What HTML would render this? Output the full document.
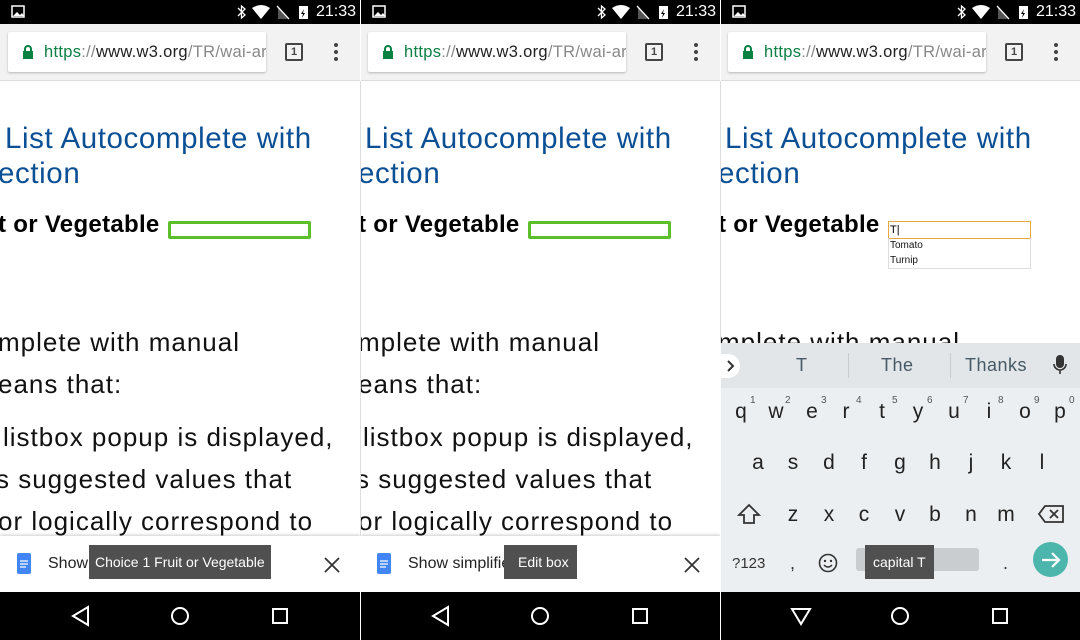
<!DOCTYPE html>
<html><head><meta charset="utf-8">
<style>
*{margin:0;padding:0;box-sizing:border-box}
body{width:1080px;height:640px;overflow:hidden;background:#fff;font-family:"Liberation Sans",sans-serif;position:relative}
.p{position:absolute;top:0;width:360px;height:640px;overflow:hidden;background:#fff}
.a{position:absolute;white-space:nowrap}
.sb{left:0;top:0;width:360px;height:24px;background:#000;color:#fff}
.tb{left:0;top:24px;width:360px;height:57px;background:#f2f2f2;border-bottom:1px solid #dcdcdc}
.url{left:8px;top:8px;width:258px;height:40px;background:#fff;border-radius:2px;box-shadow:0 1px 2px rgba(0,0,0,.25);font-size:16.5px;letter-spacing:0.3px;line-height:40px;padding-left:36px;color:#222;overflow:hidden}
.h1{color:#0b4f95;font-size:29.5px;letter-spacing:0.6px}
.h2{font-weight:bold;font-size:24px;letter-spacing:0.3px;color:#000}
.bd{font-size:26px;letter-spacing:1px;color:#111}
.bot{left:0;top:536px;width:360px;height:56px;background:#fff;box-shadow:0 -1px 3px rgba(0,0,0,.2)}
.nav{left:0;top:592px;width:360px;height:48px;background:#000}
.tip{background:#505050;color:#fff;font-size:14px;height:34px;line-height:34px;padding:0 8px}
.k{position:absolute;font-size:21px;color:#222;width:36px;text-align:center}
.n{position:absolute;font-size:10px;color:#555}
</style></head><body>

<div class="p" style="left:0">
 <div class="a sb">
  <svg class="a" style="left:11px;top:5px" width="14" height="13"><rect x="1" y="1" width="12" height="11" fill="none" stroke="#fff" stroke-width="1.5"/><path d="M2 11l4-4 3 3 2-2 2 3z" fill="#fff"/></svg>
  <svg class="a" style="left:235px;top:4px" width="80" height="16"><path d="M3 4l7 7-3.5 3V2L10 5 3 12" fill="none" stroke="#fff" stroke-width="1.3"/><path d="M17 4q9-6 18 0l-9 11z" fill="#fff"/><path d="M43 15V2l10 13z" fill="#555"/><path d="M42 2l12 13" stroke="#fff" stroke-width="1.3"/><rect x="64" y="2" width="9" height="13" fill="#fff"/><path d="M69 5l-3 5h2l-1 4 3-5h-2z" fill="#000"/></svg>
  <div class="a" style="left:316px;top:3px;font-size:16px">21:33</div>
 </div>
 <div class="a tb">
  <div class="a url"><svg class="a" style="left:14px;top:12px" width="12" height="15"><path d="M3 7V5a3 3 0 0 1 6 0v2" fill="none" stroke="#0b8043" stroke-width="2"/><rect x="1" y="7" width="10" height="8" fill="#0b8043"/></svg><span style="color:#0b8043">https</span><span style="color:#888">://</span>www.w3.org<span style="color:#888">/TR/wai-ar</span></div>
  <div class="a" style="left:285px;top:19px;width:18px;height:18px;border:2px solid #444;border-radius:2px;font-size:11px;font-weight:bold;text-align:center;line-height:14px;color:#444">1</div>
  <svg class="a" style="left:333px;top:18px" width="6" height="20"><circle cx="3" cy="3" r="2" fill="#444"/><circle cx="3" cy="10" r="2" fill="#444"/><circle cx="3" cy="17" r="2" fill="#444"/></svg>
 </div>
 <div class="a h1" style="left:5px;top:122px">List Autocomplete with</div>
 <div class="a h1" style="left:-2px;top:157px">ection</div>
 <div class="a h2" style="left:-2px;top:211px">t or Vegetable</div>
 <div class="a" style="left:168px;top:221px;width:143px;height:18px;border:3px solid #5cbf2a;border-radius:2px"></div>
 <div class="a bd" style="left:-2px;top:327px">mplete with manual</div>
 <div class="a bd" style="left:-2px;top:369px">eans that:</div>
 <div class="a bd" style="left:3px;top:422px">listbox popup is displayed,</div>
 <div class="a bd" style="left:-4px;top:464px">s suggested values that</div>
 <div class="a bd" style="left:-2px;top:506px">or logically correspond to</div>
 <div class="a bot">
  <svg class="a" style="left:17px;top:17px" width="14" height="21"><rect width="14" height="21" rx="2" fill="#4285f4"/><path d="M3 8h8M3 11h8M3 14h6" stroke="#fff" stroke-width="1.3"/></svg>
  <div class="a" style="left:48px;top:19px;font-size:16px;color:#222">Show simplified view</div>
  <div class="a tip" style="left:89px;top:9px;padding:0 6px">Choice 1 Fruit or Vegetable</div>
  <svg class="a" style="left:324px;top:21px" width="16" height="16"><path d="M1 1l14 14M15 1L1 15" stroke="#333" stroke-width="1.8"/></svg>
 </div>
 <div class="a nav"><svg width="360" height="48"><path d="M88 15v18L73 24z" fill="none" stroke="#fff" stroke-width="2"/><circle cx="180" cy="24" r="8" fill="none" stroke="#fff" stroke-width="2"/><rect x="273" y="17" width="14" height="14" fill="none" stroke="#fff" stroke-width="2"/></svg></div>
</div>
<div class="a" style="left:360px;top:81px;width:1px;height:455px;background:#ddd;z-index:2"></div>

<div class="p" style="left:361px;width:359px">
 <div class="a sb">
  <svg class="a" style="left:11px;top:5px" width="14" height="13"><rect x="1" y="1" width="12" height="11" fill="none" stroke="#fff" stroke-width="1.5"/><path d="M2 11l4-4 3 3 2-2 2 3z" fill="#fff"/></svg>
  <svg class="a" style="left:234px;top:4px" width="80" height="16"><path d="M3 4l7 7-3.5 3V2L10 5 3 12" fill="none" stroke="#fff" stroke-width="1.3"/><path d="M17 4q9-6 18 0l-9 11z" fill="#fff"/><path d="M43 15V2l10 13z" fill="#555"/><path d="M42 2l12 13" stroke="#fff" stroke-width="1.3"/><rect x="64" y="2" width="9" height="13" fill="#fff"/><path d="M69 5l-3 5h2l-1 4 3-5h-2z" fill="#000"/></svg>
  <div class="a" style="left:315px;top:3px;font-size:16px">21:33</div>
 </div>
 <div class="a tb">
  <div class="a url" style="left:7px"><svg class="a" style="left:14px;top:12px" width="12" height="15"><path d="M3 7V5a3 3 0 0 1 6 0v2" fill="none" stroke="#0b8043" stroke-width="2"/><rect x="1" y="7" width="10" height="8" fill="#0b8043"/></svg><span style="color:#0b8043">https</span><span style="color:#888">://</span>www.w3.org<span style="color:#888">/TR/wai-ar</span></div>
  <div class="a" style="left:284px;top:19px;width:18px;height:18px;border:2px solid #444;border-radius:2px;font-size:11px;font-weight:bold;text-align:center;line-height:14px;color:#444">1</div>
  <svg class="a" style="left:332px;top:18px" width="6" height="20"><circle cx="3" cy="3" r="2" fill="#444"/><circle cx="3" cy="10" r="2" fill="#444"/><circle cx="3" cy="17" r="2" fill="#444"/></svg>
 </div>
 <div class="a h1" style="left:4px;top:122px">List Autocomplete with</div>
 <div class="a h1" style="left:-3px;top:157px">ection</div>
 <div class="a h2" style="left:-3px;top:211px">t or Vegetable</div>
 <div class="a" style="left:167px;top:221px;width:143px;height:18px;border:3px solid #5cbf2a;border-radius:2px"></div>
 <div class="a bd" style="left:-3px;top:327px">mplete with manual</div>
 <div class="a bd" style="left:-3px;top:369px">eans that:</div>
 <div class="a bd" style="left:2px;top:422px">listbox popup is displayed,</div>
 <div class="a bd" style="left:-5px;top:464px">s suggested values that</div>
 <div class="a bd" style="left:-3px;top:506px">or logically correspond to</div>
 <div class="a bot">
  <svg class="a" style="left:16px;top:17px" width="14" height="21"><rect width="14" height="21" rx="2" fill="#4285f4"/><path d="M3 8h8M3 11h8M3 14h6" stroke="#fff" stroke-width="1.3"/></svg>
  <div class="a" style="left:47px;top:19px;font-size:16px;color:#222">Show simplified view</div>
  <div class="a tip" style="left:143px;top:9px;padding:0 8px 0 14px">Edit box</div>
  <svg class="a" style="left:323px;top:21px" width="16" height="16"><path d="M1 1l14 14M15 1L1 15" stroke="#333" stroke-width="1.8"/></svg>
 </div>
 <div class="a nav"><svg width="360" height="48"><path d="M87 15v18L72 24z" fill="none" stroke="#fff" stroke-width="2"/><circle cx="179" cy="24" r="8" fill="none" stroke="#fff" stroke-width="2"/><rect x="272" y="17" width="14" height="14" fill="none" stroke="#fff" stroke-width="2"/></svg></div>
</div>
<div class="a" style="left:720px;top:81px;width:1px;height:262px;background:#ddd;z-index:2"></div>

<div class="p" style="left:721px;width:359px">
 <div class="a sb">
  <svg class="a" style="left:11px;top:5px" width="14" height="13"><rect x="1" y="1" width="12" height="11" fill="none" stroke="#fff" stroke-width="1.5"/><path d="M2 11l4-4 3 3 2-2 2 3z" fill="#fff"/></svg>
  <svg class="a" style="left:234px;top:4px" width="80" height="16"><path d="M3 4l7 7-3.5 3V2L10 5 3 12" fill="none" stroke="#fff" stroke-width="1.3"/><path d="M17 4q9-6 18 0l-9 11z" fill="#fff"/><path d="M43 15V2l10 13z" fill="#555"/><path d="M42 2l12 13" stroke="#fff" stroke-width="1.3"/><rect x="64" y="2" width="9" height="13" fill="#fff"/><path d="M69 5l-3 5h2l-1 4 3-5h-2z" fill="#000"/></svg>
  <div class="a" style="left:315px;top:3px;font-size:16px">21:33</div>
 </div>
 <div class="a tb">
  <div class="a url" style="left:7px"><svg class="a" style="left:14px;top:12px" width="12" height="15"><path d="M3 7V5a3 3 0 0 1 6 0v2" fill="none" stroke="#0b8043" stroke-width="2"/><rect x="1" y="7" width="10" height="8" fill="#0b8043"/></svg><span style="color:#0b8043">https</span><span style="color:#888">://</span>www.w3.org<span style="color:#888">/TR/wai-ar</span></div>
  <div class="a" style="left:284px;top:19px;width:18px;height:18px;border:2px solid #444;border-radius:2px;font-size:11px;font-weight:bold;text-align:center;line-height:14px;color:#444">1</div>
  <svg class="a" style="left:332px;top:18px" width="6" height="20"><circle cx="3" cy="3" r="2" fill="#444"/><circle cx="3" cy="10" r="2" fill="#444"/><circle cx="3" cy="17" r="2" fill="#444"/></svg>
 </div>
 <div class="a h1" style="left:4px;top:122px">List Autocomplete with</div>
 <div class="a h1" style="left:-3px;top:157px">ection</div>
 <div class="a h2" style="left:-3px;top:211px">t or Vegetable</div>
 <div class="a" style="left:167px;top:221px;width:143px;height:18px;border:1px solid #e6a940;font-size:11px;line-height:16px;padding-left:1px">T|</div>
 <div class="a" style="left:167px;top:238px;width:143px;height:31px;border:1px solid #ddd;border-top:none;font-size:10px;line-height:15px;padding-left:1px;color:#111">Tomato<br>Turnip</div>
 <div class="a bd" style="left:-3px;top:327px">mplete with manual</div>
 <div class="a" style="left:-1px;top:343px;width:360px;height:249px;background:#eceff1">
  <div class="a" style="left:0;top:0;width:360px;height:45px;background:#e3e6e9"></div>
  <div class="a" style="left:0;top:11px;width:20px;height:24px;background:#fff;border-radius:0 12px 12px 0"></div>
  <svg class="a" style="left:6px;top:16px" width="10" height="14"><path d="M2 2l5 5-5 5" fill="none" stroke="#333" stroke-width="2"/></svg>
  <div class="a" style="left:76px;top:12px;font-size:18px;color:#455a64">T</div>
  <div class="a" style="left:128px;top:10px;width:1px;height:25px;background:#c8ccd0"></div>
  <div class="a" style="left:161px;top:12px;font-size:18px;letter-spacing:0.5px;color:#455a64">The</div>
  <div class="a" style="left:230px;top:10px;width:1px;height:25px;background:#c8ccd0"></div>
  <div class="a" style="left:245px;top:12px;font-size:18px;letter-spacing:0.5px;color:#455a64">Thanks</div>
  <svg class="a" style="left:333px;top:12px" width="14" height="20"><rect x="3" y="0" width="8" height="13" rx="4" fill="#333"/><path d="M1 9a6 6 0 0 0 12 0M7 15v4" fill="none" stroke="#333" stroke-width="1.6"/></svg>
  <div class="k" style="left:3px;top:57px">q</div><div class="k" style="left:38px;top:57px">w</div><div class="k" style="left:74px;top:57px">e</div><div class="k" style="left:108px;top:57px">r</div><div class="k" style="left:144px;top:57px">t</div><div class="k" style="left:180px;top:57px">y</div><div class="k" style="left:216px;top:57px">u</div><div class="k" style="left:251px;top:57px">i</div><div class="k" style="left:287px;top:57px">o</div><div class="k" style="left:322px;top:57px">p</div>
  <div class="n" style="left:30px;top:52px">1</div><div class="n" style="left:65px;top:52px">2</div><div class="n" style="left:101px;top:52px">3</div><div class="n" style="left:136px;top:52px">4</div><div class="n" style="left:172px;top:52px">5</div><div class="n" style="left:207px;top:52px">6</div><div class="n" style="left:243px;top:52px">7</div><div class="n" style="left:278px;top:52px">8</div><div class="n" style="left:314px;top:52px">9</div><div class="n" style="left:349px;top:52px">0</div>
  <div class="k" style="left:20px;top:108px">a</div><div class="k" style="left:55px;top:108px">s</div><div class="k" style="left:91px;top:108px">d</div><div class="k" style="left:126px;top:108px">f</div><div class="k" style="left:162px;top:108px">g</div><div class="k" style="left:197px;top:108px">h</div><div class="k" style="left:233px;top:108px">j</div><div class="k" style="left:268px;top:108px">k</div><div class="k" style="left:304px;top:108px">l</div>
  <svg class="a" style="left:17px;top:160px" width="24" height="22"><path d="M12 2L2 12h5v8h10v-8h5z" fill="none" stroke="#333" stroke-width="1.8"/></svg>
  <div class="k" style="left:55px;top:160px">z</div><div class="k" style="left:91px;top:160px">x</div><div class="k" style="left:126px;top:160px">c</div><div class="k" style="left:162px;top:160px">v</div><div class="k" style="left:197px;top:160px">b</div><div class="k" style="left:233px;top:160px">n</div><div class="k" style="left:268px;top:160px">m</div>
  <svg class="a" style="left:317px;top:161px" width="28" height="20"><path d="M8 2h18v16H8L2 10z" fill="none" stroke="#333" stroke-width="1.8"/><path d="M13 6l8 8M21 6l-8 8" stroke="#333" stroke-width="1.8"/></svg>
  <div class="a" style="left:12px;top:212px;font-size:15px;color:#333">?123</div>
  <div class="a" style="left:70px;top:210px;font-size:18px;color:#333">,</div>
  <svg class="a" style="left:98px;top:210px" width="20" height="20"><circle cx="10" cy="10" r="8.5" fill="none" stroke="#333" stroke-width="1.6"/><circle cx="7" cy="8" r="1.2" fill="#333"/><circle cx="13" cy="8" r="1.2" fill="#333"/><path d="M6 12q4 4 8 0" fill="none" stroke="#333" stroke-width="1.5"/></svg>
  <div class="a" style="left:136px;top:205px;width:123px;height:23px;background:#c9cdd0;border-radius:3px"></div>
  <div class="a tip" style="left:145px;top:202px;font-size:14px;padding:0 8px">capital T</div>
  <div class="a" style="left:283px;top:210px;font-size:18px;color:#333">.</div>
  <div class="a" style="left:313px;top:199px;width:35px;height:35px;border-radius:50%;background:#4db6ac"></div>
  <svg class="a" style="left:320px;top:207px" width="22" height="20"><path d="M2 10h17M12 3l7 7-7 7" fill="none" stroke="#fff" stroke-width="2.2"/></svg>
 </div>
 <div class="a nav"><svg width="360" height="48"><path d="M71 17h18l-9 15z" fill="none" stroke="#fff" stroke-width="2"/><circle cx="179" cy="24" r="8" fill="none" stroke="#fff" stroke-width="2"/><rect x="272" y="17" width="14" height="14" fill="none" stroke="#fff" stroke-width="2"/></svg></div>
</div>
</body></html>
